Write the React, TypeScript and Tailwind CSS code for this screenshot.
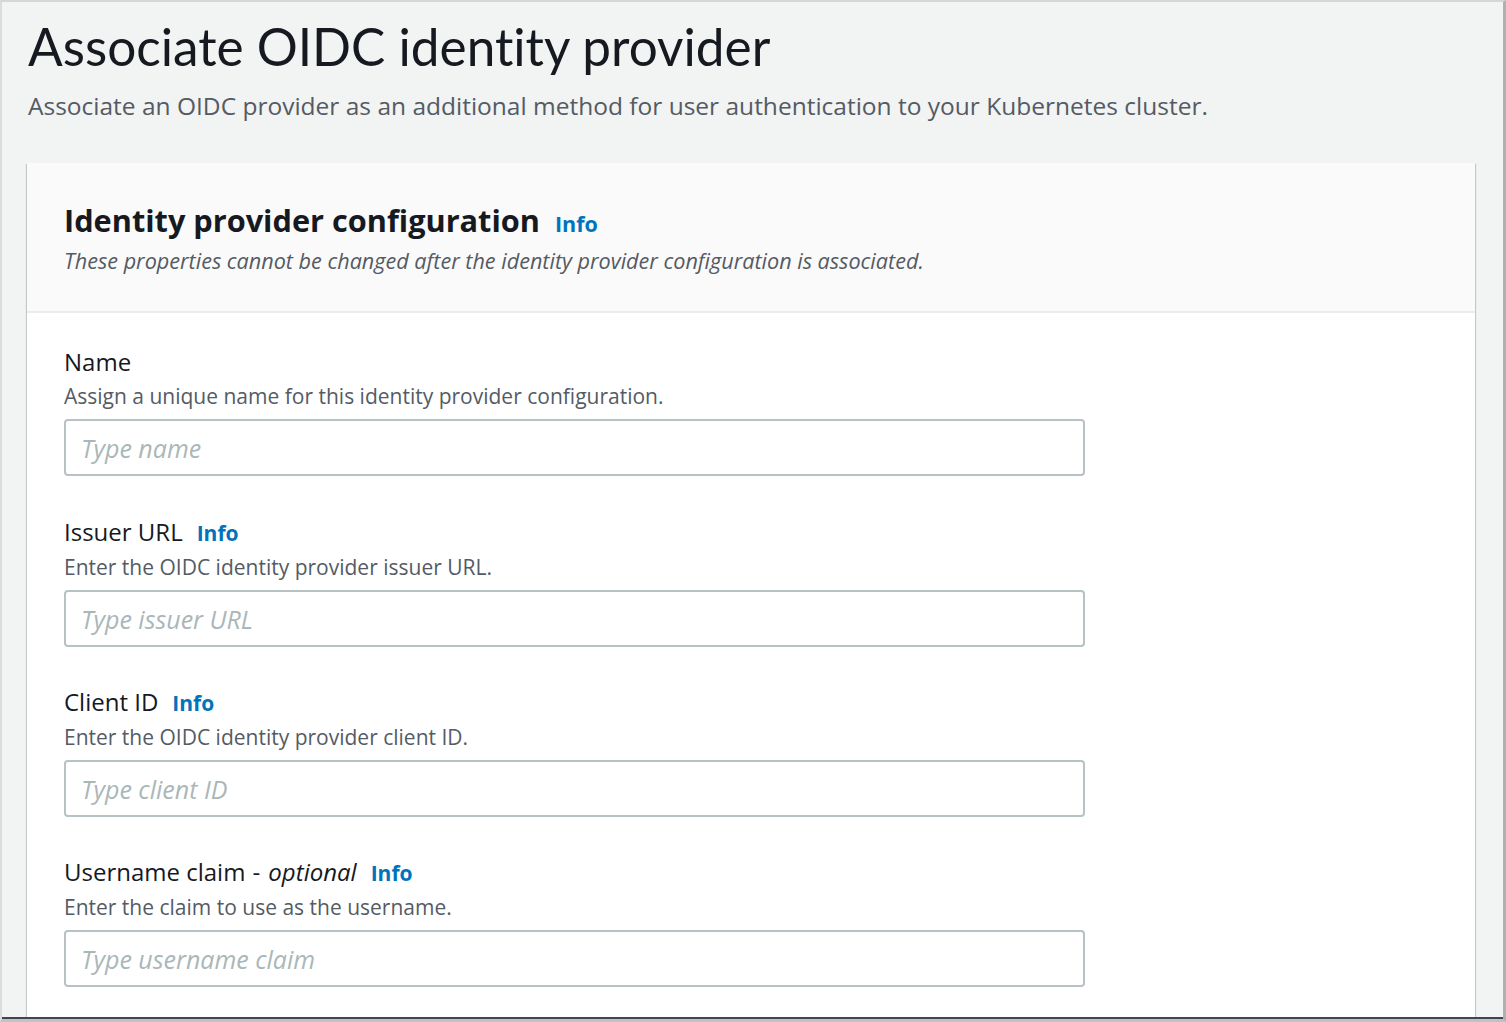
const fields = [
  { label: 'Name', info: false, optional: false, hint: 'Assign a unique name for this identity provider configuration.', placeholder: 'Type name' },
  { label: 'Issuer URL', info: true, optional: false, hint: 'Enter the OIDC identity provider issuer URL.', placeholder: 'Type issuer URL' },
  { label: 'Client ID', info: true, optional: false, hint: 'Enter the OIDC identity provider client ID.', placeholder: 'Type client ID' },
  { label: 'Username claim', info: true, optional: true, hint: 'Enter the claim to use as the username.', placeholder: 'Type username claim' },
];

const Field = ({ label, info, optional, hint, placeholder }: (typeof fields)[number]) => (
  <div className="h-[170px] pt-[33px]">
    <div className="flex items-baseline text-[24px] leading-[32px] text-[#16191f]">
      <span>{label}</span>
      {optional && (
        <span className="ml-[7px]">
          - <i className="ml-[2px]">optional</i>
        </span>
      )}
      {info && <span className="ml-[14px] text-[21px] font-bold text-[#0073bb]">Info</span>}
    </div>
    <p className="mt-[3px] text-[21px] leading-[30px] text-[#545b64]">{hint}</p>
    <input
      className="mt-[8px] h-[57px] w-[1021px] rounded-[4px] border-2 border-[#b6c2c3] bg-white px-[15px] text-[25px] italic outline-none placeholder:text-[#aab7b8]"
      placeholder={placeholder}
    />
  </div>
);

export default function App() {
  return (
    <div className="flex h-[1022px] w-[1506px] flex-col overflow-hidden border-t-2 border-l-2 border-r-[3px] border-b-[3px] border-t-[#d6d6d6] border-l-[#dcdcdc] border-r-[#b0b0b0] border-b-[#c2c2c2] font-['Open_Sans',sans-serif] [font-variant-ligatures:none]">
      <main className="flex flex-1 flex-col overflow-hidden border-b-2 border-[#3e4555] bg-[#f2f3f3] pl-[26px] pr-[28px]">
        <h1 className="mt-[12px] font-['Lato',sans-serif] text-[51.3px] leading-[64px] text-[#16191f]">
          Associate OIDC identity provider
        </h1>
        <p className="mt-[11px] text-[24.5px] leading-[34px] text-[#545b64]">
          Associate an OIDC provider as an additional method for user authentication to your Kubernetes cluster.
        </p>
        <section className="mt-[40px] ml-[-1px] w-[1448px] flex-1 bg-white shadow-[0_1px_1px_0_rgba(0,28,36,0.3),1px_1px_1px_0_rgba(0,28,36,0.15),-1px_1px_1px_0_rgba(0,28,36,0.15)]">
          <header className="h-[150px] border-b-2 border-[#eaeded] bg-[#fafafa] px-[37px] pt-[35px]">
            <div className="flex items-baseline">
              <h2 className="text-[30.7px] font-bold leading-[44px] text-[#16191f]">Identity provider configuration</h2>
              <span className="ml-[15px] text-[21.5px] font-bold text-[#0073bb]">Info</span>
            </div>
            <p className="mt-[4px] text-[21.6px] italic leading-[30px] text-[#545b64]">
              These properties cannot be changed after the identity provider configuration is associated.
            </p>
          </header>
          <div className="px-[37px]">
            {fields.map((f) => (
              <Field key={f.label} {...f} />
            ))}
          </div>
        </section>
      </main>
    </div>
  );
}
